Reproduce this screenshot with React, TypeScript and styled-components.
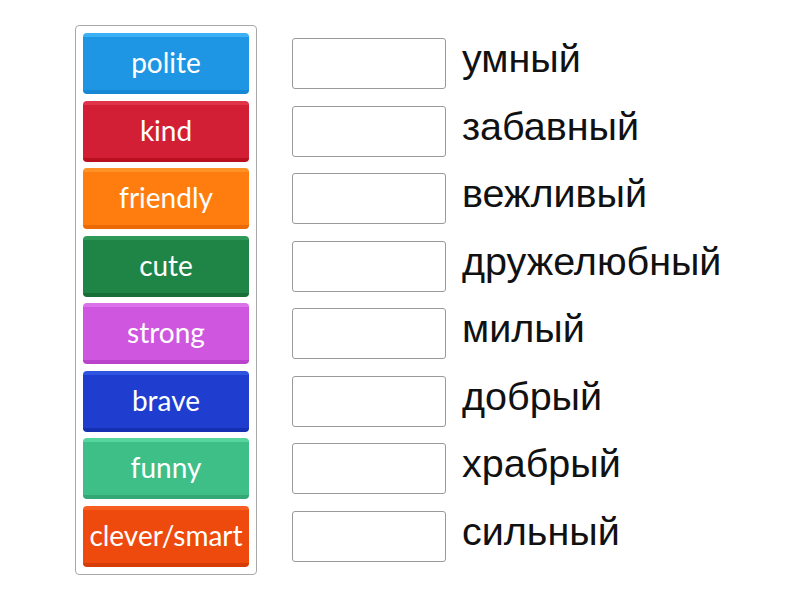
import React from "react";
import styled, { createGlobalStyle } from "styled-components";

const Global = createGlobalStyle`
  html, body { margin: 0; padding: 0; background: #fff; }
  body { width: 800px; height: 600px; overflow: hidden; }
`;

const Page = styled.div`
  display: flex;
  align-items: flex-start;
  padding: 25px 0 0 75px;
  gap: 35px;
`;

const Panel = styled.div`
  width: 182px;
  box-sizing: border-box;
  border: 1px solid #a8a8a8;
  border-radius: 4px;
  padding: 7px 7px 7px 7px;
  display: flex;
  flex-direction: column;
  gap: 6.5px;
`;

const Tile = styled.div<{ $c: string; $top: string; $bot: string }>`
  height: 61px;
  box-sizing: border-box;
  border-radius: 4px;
  background: ${(p) => p.$c};
  border-top: 4px solid ${(p) => p.$top};
  border-bottom: 4px solid ${(p) => p.$bot};
  color: #fff;
  font-family: Lato, "Open Sans", sans-serif;
  font-size: 28px;
  font-weight: 400;
  display: flex;
  align-items: center;
  justify-content: center;
  white-space: nowrap;
  padding-bottom: 3px;
`;

const Rows = styled.div`
  display: flex;
  flex-direction: column;
  gap: 16.5px;
  padding-top: 13px;
`;

const Row = styled.div`
  display: flex;
  align-items: center;
  gap: 16px;
  height: 51px;
`;

const Box = styled.div`
  width: 154px;
  height: 51px;
  box-sizing: border-box;
  border: 1px solid #9a9a9a;
  border-radius: 3px;
  background: #fff;
`;

const Word = styled.div`
  font-family: "Liberation Sans", Arial, sans-serif;
  font-size: 39.5px;
  color: #111;
  margin-top: -10px;
`;

const tiles = [
  { t: "polite", c: "#1f96e4", top: "#3bb0f4", bot: "#1687d4" },
  { t: "kind", c: "#d21f36", top: "#e0344a", bot: "#b8101f" },
  { t: "friendly", c: "#ff7d0e", top: "#ff9227", bot: "#ec6a05" },
  { t: "cute", c: "#1f8546", top: "#2f9a58", bot: "#176e37" },
  { t: "strong", c: "#cf57df", top: "#dc72ea", bot: "#b944cb" },
  { t: "brave", c: "#1f3ecf", top: "#2f55e0", bot: "#1530b0" },
  { t: "funny", c: "#3ebf88", top: "#56d59d", bot: "#33a876" },
  { t: "clever/smart", c: "#ee4a0e", top: "#f65e22", bot: "#d63c06" },
];

const words = ["умный", "забавный", "вежливый", "дружелюбный", "милый", "добрый", "храбрый", "сильный"];

export default function App() {
  return (
    <>
      <Global />
      <Page>
        <Panel>
          {tiles.map((x) => (
            <Tile key={x.t} $c={x.c} $top={x.top} $bot={x.bot}>
              {x.t}
            </Tile>
          ))}
        </Panel>
        <Rows>
          {words.map((w) => (
            <Row key={w}>
              <Box />
              <Word>{w}</Word>
            </Row>
          ))}
        </Rows>
      </Page>
    </>
  );
}
